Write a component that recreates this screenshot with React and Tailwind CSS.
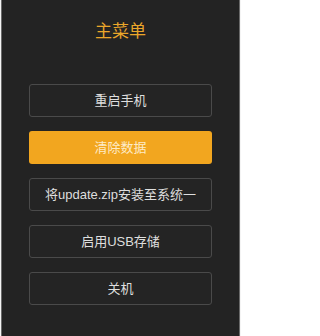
export default function App() {
  const items = [
    { label: "重启手机", active: false },
    { label: "清除数据", active: true },
    { label: "将update.zip安装至系统一", active: false },
    { label: "启用USB存储", active: false },
    { label: "关机", active: false },
  ];
  return (
    <div
      className="w-[241px] h-[336px] bg-[#f4f4f4] px-[1px] overflow-hidden"
      style={{ fontFamily: '"Liberation Sans", "Noto Sans CJK SC", sans-serif' }}
    >
      <div className="h-full bg-[#232323] border-l border-r border-[#6a6a6a] flex flex-col items-center">
        <div className="mt-[21px] h-[22px] text-[17px] leading-[22px] text-[#eba62a]">主菜单</div>
        <div className="mt-[41px] flex flex-col gap-[14px] w-[183px]">
          {items.map((it) =>
            it.active ? (
              <div
                key={it.label}
                className="h-[33px] rounded-[3px] bg-[#f2a61f] flex items-center justify-center text-[13px] text-[#fdebc8] whitespace-nowrap overflow-hidden"
              >
                {it.label}
              </div>
            ) : (
              <div
                key={it.label}
                className="h-[33px] rounded-[3px] border border-[#4a4a4a] bg-[#242424] flex items-center justify-center text-[13px] text-[#dedede] whitespace-nowrap overflow-hidden"
              >
                {it.label}
              </div>
            )
          )}
        </div>
      </div>
    </div>
  );
}
